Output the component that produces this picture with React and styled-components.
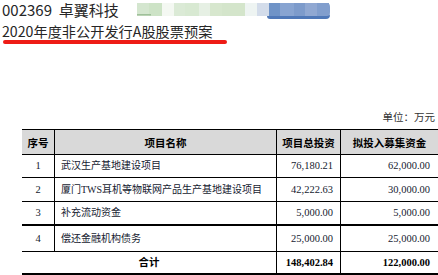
import React from "react";
import styled, { createGlobalStyle } from "styled-components";

const Global = createGlobalStyle`
  html, body { margin: 0; padding: 0; background: #fff; }
  body { width: 438px; height: 275px; overflow: hidden; }
`;

const Page = styled.div`
  width: 438px;
  height: 275px;
  background: #fff;
  display: flex;
  flex-direction: column;
`;

const TitleRow = styled.div`
  display: flex;
  align-items: flex-start;
  gap: 18px;
  height: 21px;
  padding-top: 1px;
  padding-left: 2px;
`;

const Ticker = styled.div`
  flex: none;
  font-family: "Noto Sans CJK SC", "Noto Sans", sans-serif;
  font-size: 15px;
  line-height: 18px;
  color: #262626;
  white-space: pre;
`;

const Mosaic = styled.svg`
  display: block;
  margin-top: 2px;
  flex: none;
`;

const Subtitle = styled.div`
  font-family: "Noto Sans CJK SC", "Noto Sans", sans-serif;
  font-size: 14.2px;
  line-height: 18px;
  color: #262626;
  padding-left: 2px;
  white-space: nowrap;
`;

const Underline = styled.div`
  width: 224px;
  height: 4px;
  margin-left: 3px;
  border-radius: 2px;
  background: #ee1c16;
`;

const Unit = styled.div`
  margin-top: 67px;
  align-self: flex-end;
  padding-right: 3px;
  font-family: "Liberation Serif", "Noto Sans CJK SC", serif;
  font-size: 10.5px;
  line-height: 13px;
  color: #333;
`;

const Table = styled.table`
  margin-top: 5px;
  margin-left: 22px;
  width: 416px;
  border-spacing: 0;
  border-collapse: separate;
  border-top: 1px solid #000;
  table-layout: fixed;
  font-family: "Liberation Serif", "Noto Sans CJK SC", serif;
  font-size: 10.5px;
  color: #151a30;
`;

const HeadCell = styled.th`
  height: ${(p) => p.$h}px;
  padding: 0;
  background: #d9d9d9;
  font-family: "Noto Sans CJK SC", sans-serif;
  font-weight: 700;
  font-size: 10.5px;
  color: #000;
  text-align: center;
  vertical-align: middle;
  border-bottom: 1px solid #000;
  border-right: ${(p) => (p.$last ? "none" : "1px solid #000")};
`;

const Cell = styled.td`
  height: ${(p) => p.$h}px;
  padding: 0 ${(p) => p.$pr || 0}px 0 ${(p) => p.$pl || 0}px;
  text-align: ${(p) => p.$align || "left"};
  vertical-align: middle;
  white-space: nowrap;
  line-height: 12px;
  font-weight: ${(p) => (p.$bold ? 700 : 400)};
  color: ${(p) => (p.$bold ? "#000" : "inherit")};
  border-bottom: ${(p) => p.$bb || 1}px solid #000;
  border-right: ${(p) => (p.$last ? "none" : "1px solid #000")};
`;

const Name = styled.span`
  font-family: "Liberation Serif", "Noto Sans CJK SC", serif;
  font-size: 10px;
`;

const TotalLabel = styled.span`
  font-family: "Noto Sans CJK SC", sans-serif;
  font-weight: 700;
  color: #000;
`;

const tiles = [
  [135, 12, "#d4e6cf"],
  [147, 13, "#cde3c6"],
  [160, 12, "#f4f8f2"],
  [172, 11, "#dbead6"],
  [183, 14, "#d8e9d2"],
  [197, 11, "#e6f0e4"],
  [208, 12, "#d7e7ce"],
  [220, 23, "#d4e5cb"],
  [243, 12, "#eef4f2"],
  [255, 12, "#d3dcea"],
  [267, 11, "#6f93c7"],
  [278, 14, "#88a4d1"],
  [292, 11, "#7d9bcb"],
  [303, 12, "#90a8d2"],
  [315, 12, "#819ecd"],
];

function MosaicBlur() {
  const x0 = 135;
  return (
    <Mosaic width="194" height="17" viewBox="0 0 194 17">
      {tiles.map(([x, w, c], i) => (
        <rect key={i} x={x - x0} y="0" width={w} height="13" fill={c} />
      ))}
      <rect x="0" y="11" width="14" height="1.5" fill="#9fc09a" />
      <path d="M130 13 H190 Q193 13 193 9 V4 Q193 0 190 0 L185 0 V13 Z" fill="#819ecd" />
      <path d="M130 13 H190 Q193 13 193 10 V12 Q193 16 189 16 H133 Q130 16 130 13 Z" fill="#4f78b8" />
    </Mosaic>
  );
}

const rows = [
  { no: "1", name: "武汉生产基地建设项目", total: "76,180.21", raise: "62,000.00", h: 23, bb: 1 },
  { no: "2", name: "厦门TWS耳机等物联网产品生产基地建设项目", total: "42,222.63", raise: "30,000.00", h: 24, bb: 1 },
  { no: "3", name: "补充流动资金", total: "5,000.00", raise: "5,000.00", h: 24, bb: 2 },
  { no: "4", name: "偿还金融机构债务", total: "25,000.00", raise: "25,000.00", h: 26, bb: 1 },
];

export default function App() {
  return (
    <>
      <Global />
      <Page>
        <TitleRow>
          <Ticker>002369  卓翼科技</Ticker>
          <MosaicBlur />
        </TitleRow>
        <Subtitle>2020年度非公开发行A股股票预案</Subtitle>
        <Underline />
        <Unit>单位：万元</Unit>
        <Table>
          <colgroup>
            <col style={{ width: 33 }} />
            <col style={{ width: 222 }} />
            <col style={{ width: 64 }} />
            <col style={{ width: 97 }} />
          </colgroup>
          <thead>
            <tr>
              <HeadCell $h={24}>序号</HeadCell>
              <HeadCell $h={24}>项目名称</HeadCell>
              <HeadCell $h={24}>项目总投资</HeadCell>
              <HeadCell $h={24} $last>拟投入募集资金</HeadCell>
            </tr>
          </thead>
          <tbody>
            {rows.map((r) => (
              <tr key={r.no}>
                <Cell $h={r.h - r.bb} $bb={r.bb} $align="center">{r.no}</Cell>
                <Cell $h={r.h - r.bb} $bb={r.bb} $pl={6}><Name>{r.name}</Name></Cell>
                <Cell $h={r.h - r.bb} $bb={r.bb} $align="right" $pr={7}>{r.total}</Cell>
                <Cell $h={r.h - r.bb} $bb={r.bb} $align="right" $pr={8} $last>{r.raise}</Cell>
              </tr>
            ))}
            <tr>
              <Cell colSpan={2} $h={21} $bb={2} $align="center">
                <TotalLabel>合计</TotalLabel>
              </Cell>
              <Cell $h={21} $bb={2} $align="right" $pr={7} $bold>148,402.84</Cell>
              <Cell $h={21} $bb={2} $align="right" $pr={8} $bold $last>122,000.00</Cell>
            </tr>
          </tbody>
        </Table>
      </Page>
    </>
  );
}
